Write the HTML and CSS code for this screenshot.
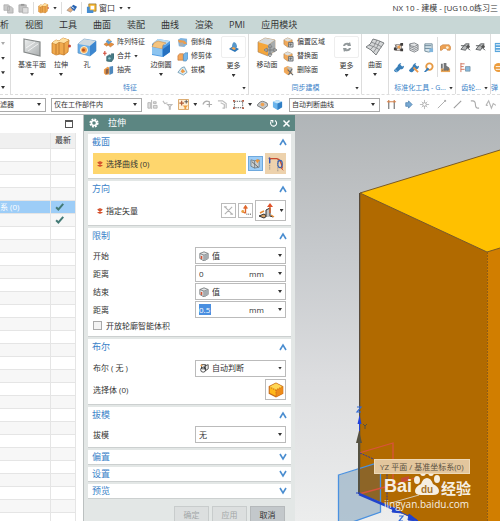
FILE: index.html
```html
<!DOCTYPE html>
<html lang="zh-CN">
<head>
<meta charset="utf-8">
<title>NX 10 - 建模</title>
<link rel="stylesheet" href="styles.css">
</head>
<body>
<svg class="sprite" aria-hidden="true">
  <defs>
    <linearGradient id="grey" x1="0" y1="0" x2="1" y2="1"><stop offset="0" stop-color="#eef0f0"/><stop offset="1" stop-color="#a9adae"/></linearGradient>
    <symbol id="copy" viewBox="0 0 12 12"><path d="M1 2h5l1 1v5H1zM5 4h4l2 2v5H5z" fill="#c9c9c9" stroke="#a9a9a9" stroke-width=".8"/></symbol>
    <symbol id="paste" viewBox="0 0 12 12"><path d="M1 2h8v8H1z" fill="#c4c4c4" stroke="#a5a5a5" stroke-width=".8"/><path d="M3 1h4v2H3z" fill="#999"/><path d="M5 5h6v6H5z" fill="#dedede" stroke="#aaa" stroke-width=".8"/></symbol>
    <symbol id="extrude" viewBox="0 0 20 20"><path d="M1 6l4-3 3 1 4-3 6 2-1 12-4 3-4-1-4 1-4-2z" fill="#f0a94c" stroke="#c67d28" stroke-width=".8"/><path d="M1 6l4 1 3-2 5 1 5-3M5 7v10M8 5v12M13 6v12" fill="none" stroke="#ba772d" stroke-width=".9"/><path d="M5 3l3 1 4-3 6 2-5 3-5-1-3 2-4-1z" fill="#ffe0a0"/><circle cx="18.5" cy="9" r="1.5" fill="#c74b35"/></symbol>
    <symbol id="touch" viewBox="0 0 12 12"><path d="M1 8l4-4 4 2-4 4z" fill="#e5b184" stroke="#86796f" stroke-width=".6"/><path d="M5 5l3-3 4 2-3 5z" fill="#2864b3"/><path d="M6 4l3 2" stroke="#fff"/></symbol>
    <symbol id="windows" viewBox="0 0 12 12"><path d="M3 1h8v8H3z" fill="#f7b62d" stroke="#826a37" stroke-width=".7"/><path d="M5 3h4v4H5z" fill="#fff"/><path d="M1 4h3v4h4v3H1z" fill="#458dd3"/></symbol>
    <symbol id="plane" viewBox="0 0 20 20"><path d="M2 2l16 3v14L2 15z" fill="url(#grey)" stroke="#858989" stroke-width="1.2"/><path d="M4 11l9-6M6 14l10-7" stroke="#fff" stroke-opacity=".7"/></symbol>
    <symbol id="hole" viewBox="0 0 20 20"><path d="M1 7l6-5 12 2v10l-6 5-12-3z" fill="#69aee8" stroke="#5b93c4" stroke-width=".7"/><path d="M1 7l6-5 12 2-6 5z" fill="#cfd9df"/><path d="M13 9l6-5v10l-6 5z" fill="#3c86cf"/><circle cx="7" cy="13" r="3.5" fill="#f3a14a" stroke="#fff3d7"/><circle cx="6.5" cy="13" r="1.5" fill="#b95125"/></symbol>
    <symbol id="pattern" viewBox="0 0 12 12"><path d="M1 8l3-2 3 2-3 2zM5 8l3-2 4 2-4 3z" fill="#e88f3c" stroke="#a96c37" stroke-width=".5"/><path d="M3 5l3-3 4 3-4 3z" fill="#5b9bd2"/><path d="M5 3l2-1 2 2-2 1z" fill="#f2b064"/></symbol>
    <symbol id="unite" viewBox="0 0 12 12"><path d="M4 6l3-2 2 1V3h3v5l-3 4-5-1z" fill="#477b86" stroke="#305c66" stroke-width=".6"/><circle cx="7" cy="8" r="1.3" fill="#8ec4cc"/><path d="M2 0v5M0 2.500h4" stroke="#cf4a37" stroke-width="1.200"/></symbol>
    <symbol id="shell" viewBox="0 0 12 12"><path d="M1 5l4-3 2 1v7l-4 1-2-2z" fill="#ec9b4a"/><path d="M7 2l4-1v8l-4 2z" fill="#4d88bd"/><path d="M3 5l3-1v5l-3 1z" fill="#8b6148"/></symbol>
    <symbol id="blend" viewBox="0 0 20 20"><path d="M1 7l6-5 12 2v11l-7 5-11-2z" fill="#4f9be2"/><path d="M7 2l12 2-5 4-12-2z" fill="#b9daef"/><path d="M1 10q1-5 6-6l8 2q-4 1-4 6z" fill="#f5c47e" stroke="#c48f53" stroke-width=".6"/><path d="M1 10l10 2v7L1 17z" fill="#8cc4f0"/><path d="M12 12l7-5v8l-7 5z" fill="#2671c0"/></symbol>
    <symbol id="chamfer" viewBox="0 0 12 12"><path d="M1 3l3-2 7 1v6l-3 3-6-1z" fill="#7fb3df"/><path d="M1 3l7 1 3 3-3 1-6-2z" fill="#ee9c49"/><path d="M3 6h4v4H3z" fill="#a8adb0"/></symbol>
    <symbol id="trim" viewBox="0 0 12 12"><path d="M1 5l2-2h4v7H1z" fill="#f4a65a" stroke="#bb763d" stroke-width=".7"/><path d="M7 4l2-2h3v6l-2 3H7z" fill="#75b6e9" stroke="#4980ad" stroke-width=".6"/></symbol>
    <symbol id="draft" viewBox="0 0 12 12"><path d="M1 8l4-5 3-1 3 6-4 3z" fill="#d9ecf5" stroke="#5f8da8" stroke-width=".8"/><path d="M4 7l2-3 3 3-3 2z" fill="#ed9b48"/></symbol>
    <symbol id="more" viewBox="0 0 12 12"><path d="M1 8l4-3 6 3-4 3z" fill="#2e77b9"/><path d="M4 6q0-4 2-5 3 1 3 5l-2 2z" fill="#5797ca"/><path d="M3 7l3-1 2 2-2 1z" fill="#f5a44c"/></symbol>
    <symbol id="move" viewBox="0 0 20 20"><path d="M1 5l7-4 10 2v11l-7 5-10-4z" fill="#f5a63b" stroke="#a17e57" stroke-width=".6"/><path d="M1 5l7-4 10 2-7 5z" fill="#d5d8d9"/><path d="M11 8l7-5v11l-7 5z" fill="#a6abad"/><path d="M13 8v10M8 13h11M13 7l-2 3h4zM13 20l-2-3h4zM7 13l3-2v4zM20 13l-3-2v4z" stroke="#77797b" fill="#f3f3f3" stroke-width=".9"/></symbol>
    <symbol id="offset" viewBox="0 0 12 12"><path d="M1 3l4-2 5 2v6l-5 2-4-3z" fill="#f1a95a" stroke="#a57948" stroke-width=".6"/><path d="M1 3l4-2 5 2-5 2z" fill="#dadfe0"/><path d="M6 6h5v5H6z" fill="#c0c4c7" stroke="#5b6064" stroke-width=".8"/><path d="M8 7v3M7 8h3" stroke="#555" stroke-width=".7"/></symbol>
    <symbol id="delete" viewBox="0 0 12 12"><path d="M1 3l4-2 5 2v6l-5 2-4-3z" fill="#f1a95a"/><path d="M4 2l6 1v6z" fill="#b8bec1"/><path d="M5 5l6 6M10 4l-4 7" stroke="#62676a" stroke-width="1.200"/></symbol>
    <symbol id="cycle" viewBox="0 0 12 12"><path d="M2 5q1-4 6-3l1-1 1 4H6l1-1Q5 3 4 5zM10 7q-1 4-6 3l-1 1-1-4h4L5 8q2 1 3-1z" fill="#92999b"/></symbol>
    <symbol id="surface" viewBox="0 0 20 20"><path d="M1 10q5-2 7-8 5 1 11 4-5 7-8 12Q6 12 1 10z" fill="#d5d7d8" stroke="#7b7f81"/><path d="M4 8q7 2 11 5M6 5q6 2 11 5M5 13q5-4 7-10M8 16q4-5 7-12" fill="none" stroke="#7b7f81" stroke-width=".8"/></symbol>
    <symbol id="nodes" viewBox="0 0 12 12"><path d="M2 3l7 6M9 2L3 9M3 3h6v6H3z" fill="none" stroke="#77706c"/><path d="M1 6h3v3H1zM8 1h3v3H8zM8 7h3v3H8z" fill="#3f3c3b"/><path d="M5 4h3v3H5z" fill="#ee9e4c"/></symbol>
    <symbol id="layers" viewBox="0 0 12 12"><path d="M2 2l5-1 4 2-4 2-5-1zM2 5l5 2 4-2M2 7l5 2 4-2M2 9l5 2 4-2M2 2v7M11 3v6" fill="#e2e4e5" stroke="#747a7e" stroke-width=".9"/></symbol>
    <symbol id="db" viewBox="0 0 12 12"><path d="M2 2h8v8q-4 2-8 0z" fill="#d6e4ec" stroke="#748c9a"/><path d="M2 4h7M2 7h7" stroke="#668395"/><path d="M7 7h4v4H7z" fill="#80b6de"/></symbol>
    <symbol id="band" viewBox="0 0 12 12"><path d="M0 5l3-2h7l2 3-1 3H8L7 7H4L2 9H0z" fill="#eea153" stroke="#c17d3d" stroke-width=".6"/><circle cx="8" cy="6" r="1.500" fill="#fff0cf"/></symbol>
    <symbol id="wrench" viewBox="0 0 12 12"><path d="M1 9l4-4q0-3 4-4L8 3l2 2 2-1q0 4-4 4l-3 3q-3 1-4-2z" fill="#397eb8"/><path d="M2 8l3 3" stroke="#a7d4f1"/></symbol>
    <symbol id="wrench2" viewBox="0 0 12 12"><path d="M1 9l4-4q0-3 4-4L8 3l2 2 2-1q0 4-4 4l-3 3q-3 1-4-2z" fill="#397eb8"/><path d="M6 6l5 5" stroke="#ee994a" stroke-width="2"/></symbol>
    <symbol id="wheel" viewBox="0 0 12 12"><circle cx="7" cy="5" r="3.500" fill="#fff" stroke="#e79a43" stroke-width="2"/><path d="M1 11l4-5 2 2-4 3z" fill="#367cba"/></symbol>
    <symbol id="gear-car" viewBox="0 0 12 12"><path d="M1 7h10v4H1z" fill="#eba656"/><path d="M1 2h2v5H1zM4 1h3v3l3 2v3H4z" fill="#757779"/><path d="M2 9h8" stroke="#57595a" stroke-dasharray="1 1"/></symbol>
    <symbol id="gears" viewBox="0 0 12 12"><path d="M1 4h5l5 5M1 8l5-6h4l-4 7z" fill="#b8babb" stroke="#5f6365"/><circle cx="9" cy="5" r="1.700" fill="#555"/></symbol>
    <symbol id="rack" viewBox="0 0 12 12"><path d="M1 1v10M1 2h4M1 5h3M1 8h4" stroke="#cf6d55"/><path d="M6 5h5v5H6z" fill="#8bbcdf" stroke="#638396" stroke-width=".7"/></symbol>
    <symbol id="spring" viewBox="0 0 12 12"><path d="M2 1h8v10H2z" fill="#58a5dc"/><path d="M3 3h6M3 6h6M3 9h6" stroke="#fff"/></symbol>
    <symbol id="ball" viewBox="0 0 12 12"><circle cx="6" cy="6" r="5" fill="#ec9c3c"/><path d="M3 5h6M3 8h6" stroke="#fff"/></symbol>
    <symbol id="clip" viewBox="0 0 12 12"><path d="M1 4h3v6H1zM5 1v10M7 3h3v2H7zM7 7h4v3H7z" fill="#dedede" stroke="#b5b5b5"/></symbol>
    <symbol id="filter" viewBox="0 0 12 12"><path d="M1 2l2 3 3-1M6 6h5L9 8v3H8V8z" fill="none" stroke="#bcbcbc" stroke-width="1.200"/></symbol>
    <symbol id="snap" viewBox="0 0 12 12"><path d="M.5 .5h11v11H.5z" fill="#fff0d7" stroke="#d8a260"/><path d="M4 2v5M1.500 4.500h5" stroke="#b05b34" stroke-width="1.300"/><path d="M5 7h6l-2 2v2H7V9z" fill="#ef9c3d"/><path d="M9 1v4M7 3h4" stroke="#555"/></symbol>
    <symbol id="arc" viewBox="0 0 12 12"><path d="M1 6q2-5 7-3v6M5 6h6" fill="none" stroke="#adadad" stroke-width="1.300"/></symbol>
    <symbol id="arc2" viewBox="0 0 12 12"><path d="M1 2h5l4 3v5M4 4l4 2v4H6" fill="none" stroke="#bcbcbc" stroke-width="1.300"/></symbol>
    <symbol id="marquee" viewBox="0 0 12 12"><path d="M1.500 2.500h9v7h-9z" fill="none" stroke="#4e5356" stroke-dasharray="1.500 1"/><path d="M0 1h2v2H0zM10 1h2v2h-2zM0 9h2v2H0zM10 9h2v2h-2z" fill="#b45e47"/></symbol>
    <symbol id="disc" viewBox="0 0 12 12"><path d="M0 7q4-6 8-4 4 1 4 4l-5 4z" fill="#c5c7c8" stroke="#77797b"/><circle cx="6" cy="6" r="2" fill="#efa150"/></symbol>
    <symbol id="cube-blue" viewBox="0 0 12 12"><path d="M1 3l5-2 5 2v6l-5 3-5-3z" fill="#69b4ed"/><path d="M1 3l5-2 5 2-5 2z" fill="#c5e6fb"/><path d="M6 5l5-2v6l-5 3z" fill="#317fc5"/></symbol>
    <symbol id="parallel" viewBox="0 0 12 12"><path d="M3 2v9M9 2v9" stroke="#777" stroke-width="1.300"/><path d="M1 3h10M3 1v3M9 1v3" stroke="#d58550" stroke-width="1.200"/></symbol>
    <symbol id="arrow" viewBox="0 0 12 12"><path d="M3 4h3V2l4 4-4 4V8H3z" fill="#78a9d3" stroke="#4c80ad" stroke-width=".8"/></symbol>
    <symbol id="cross" viewBox="0 0 12 12"><path d="M6 1v10M1 6h10M3 3l6 6M9 3L3 9" stroke="#b9b9b9"/><circle cx="6" cy="6" r="2" fill="#fff" stroke="#aaa"/></symbol>
    <symbol id="line" viewBox="0 0 12 12"><path d="M2 10l8-8" stroke="#a9a9a9"/><path d="M9 1h2v2H9z" fill="#aaa"/></symbol>
    <symbol id="slash" viewBox="0 0 12 12"><path d="M2 10l8-8" stroke="#9e9e9e" stroke-width="1.200"/></symbol>
    <symbol id="curve" viewBox="0 0 12 12"><path d="M2 2h2q3 0 3 4t3 4h1" fill="none" stroke="#aaa" stroke-width="1.200"/></symbol>
    <symbol id="spline" viewBox="0 0 12 12"><path d="M1 7l3-5 3 8 2-5 3 2M1 7h2" fill="none" stroke="#b4b4b4" stroke-width="1.200"/></symbol>
    <symbol id="gear" viewBox="0 0 12 12"><circle cx="6" cy="6" r="4.500" fill="none" stroke="#fff" stroke-width="2" stroke-dasharray="2.200 1.330"/><circle cx="6" cy="6" r="3" fill="none" stroke="#fff" stroke-width="1.800"/></symbol>
    <symbol id="reset" viewBox="0 0 12 12"><path d="M3 3a4 4 0 1 0 5-1M2 2h3v3" fill="none" stroke="#fff" stroke-width="1.500"/></symbol>
    <symbol id="close" viewBox="0 0 12 12"><path d="M2 2l8 8M10 2l-8 8" stroke="#fff" stroke-width="2"/></symbol>
    <symbol id="up" viewBox="0 0 8 8"><path d="M1 7l3-5 3 5" fill="none" stroke="#4a8dd0" stroke-width="1.600"/></symbol>
    <symbol id="down" viewBox="0 0 8 8"><path d="M1 1l3 5 3-5" fill="none" stroke="#4a8dd0" stroke-width="1.600"/></symbol>
    <symbol id="check" viewBox="0 0 12 12"><path d="M1.500 7l3 3L11 2.500" fill="none" stroke="#437a76" stroke-width="2.600"/></symbol>
    <symbol id="star" viewBox="0 0 8 8"><path d="M4 0v8M1 1.500l6 5M7 1.500l-6 5" stroke="#d4502c" stroke-width="1.800"/></symbol>
    <symbol id="sketch" viewBox="0 0 12 12"><path d="M1 2l4 1v8L1 9zM5 3l5-1v8l-5 1" fill="#c8cdd0" stroke="#64727c" stroke-width=".8"/><path d="M2 4l7 6" stroke="#666"/><path d="M8 1l1 1 2 1-2 1-1 2-1-2-1-1 1-1z" fill="#ee9538"/></symbol>
    <symbol id="curves" viewBox="0 0 20 20"><path d="M3 3v14M12 5v13" stroke="#777" stroke-dasharray="1 1"/><path d="M3 3v6M2 3l2 2" stroke="#2850bd" stroke-width="1.500"/><path d="M3 4h8q5 1 6 11" fill="none" stroke="#c8492e" stroke-width="1.600"/><ellipse cx="14.500" cy="10" rx="2.500" ry="4" fill="none" stroke="#315fb3" stroke-width="1.200"/><path d="M15 14l3 3" stroke="#c8492e"/></symbol>
    <symbol id="flip" viewBox="0 0 12 12"><path d="M2 2l8 8M10 2l-8 8M1 2h3M8 10h3" stroke="#b3b3b3" stroke-width="1.200" fill="none"/></symbol>
    <symbol id="vector" viewBox="0 0 12 12"><path d="M6 9V2M4 4l2-3 2 3M6 9L2 7" stroke="#df672d" fill="none" stroke-width="1.500"/><circle cx="3" cy="7" r="1.500" fill="#e8a242"/><path d="M7 10h1M9 10h1M11 10h1" stroke="#333"/></symbol>
    <symbol id="normal" viewBox="0 0 18 18"><path d="M1 14l5-2 3 2-3 2z" fill="#d9a266" stroke="#333"/><path d="M8 15V8l4-2v8l3 1" fill="#c3c4c4" stroke="#333"/><path d="M12 11V4" stroke="#d5662f" stroke-width="1.500"/><path d="M9 5l3-4 3 4z" fill="#e05129"/><path d="M2 11l4-2M13 13l3 2" stroke="#e78b35" stroke-width="1.500"/></symbol>
    <symbol id="limit" viewBox="0 0 12 12"><path d="M1 3l5-2 5 2v6l-5 3-5-3z" fill="#e2e4e5" stroke="#72777a"/><path d="M1 3l5 2 5-2M6 5v7" fill="none" stroke="#72777a"/><path d="M6 5l5-2v6l-5 3z" fill="#a5abaf"/><path d="M3 9.500V6" stroke="#d55233" stroke-width="1.800"/></symbol>
    <symbol id="boolean" viewBox="0 0 12 12"><path d="M3 2h5v5H3zM6 4l5-2v5L8 9z" fill="none" stroke="#333"/><circle cx="5" cy="8" r="3" fill="none" stroke="#333"/><circle cx="3" cy="3" r="1.300" fill="#e9a04c"/></symbol>
    <symbol id="body" viewBox="0 0 16 16"><path d="M2 5l6-3 6 3v6l-6 3-6-3z" fill="#ffb718" stroke="#c96c18"/><path d="M2 5l6-3 6 3-6 3z" fill="#ffd755"/><path d="M8 8l6-3v6l-6 3z" fill="#ee8b18"/><path d="M2 5l6 3 6-3M8 8v6" stroke="#c96c18" stroke-dasharray="1 1" fill="none"/></symbol>
  </defs>
</svg>

<header class="titlebar">
  <div class="quick">
    <button aria-label="复制"><svg><use href="#copy"/></svg></button>
    <button aria-label="粘贴"><svg><use href="#paste"/></svg></button>
    <i class="rule"></i>
    <button aria-label="拉伸"><svg><use href="#extrude"/></svg></button><i class="caret"></i>
    <i class="rule"></i>
    <button aria-label="触控"><svg><use href="#touch"/></svg></button>
    <i class="rule"></i>
    <button class="window-menu"><svg><use href="#windows"/></svg>窗口</button><i class="caret"></i><i class="caret"></i>
  </div>
  <h1>NX 10 - 建模 - [UG10.0练习三</h1>
</header>

<nav class="menu">
  <a href="#a">析</a><a href="#a">视图</a><a href="#a">工具</a><a href="#a">曲面</a><a href="#a">装配</a><a href="#a">曲线</a><a href="#a">渲染</a><a href="#a">PMI</a><a href="#a">应用模块</a>
</nav>

<section class="ribbon">
  <div class="edge"><i class="caret pale"></i><i class="caret"></i><i class="caret"></i><i class="caret"></i></div>
  <div class="group">
    <div class="tools">
      <button class="big"><svg><use href="#plane"/></svg>基准平面<i class="caret"></i></button>
      <button class="big"><svg><use href="#extrude"/></svg>拉伸<i class="caret"></i></button>
      <button class="big"><svg><use href="#hole"/></svg>孔</button>
      <div class="stack">
        <button><svg><use href="#pattern"/></svg>阵列特征</button>
        <button><svg><use href="#unite"/></svg>合并<i class="caret"></i></button>
        <button><svg><use href="#shell"/></svg>抽壳</button>
      </div>
      <button class="big"><svg><use href="#blend"/></svg>边倒圆<i class="caret"></i></button>
      <div class="stack">
        <button><svg><use href="#chamfer"/></svg>倒斜角</button>
        <button><svg><use href="#trim"/></svg>修剪体</button>
        <button><svg><use href="#draft"/></svg>拔模</button>
      </div>
      <button class="big more"><span><svg><use href="#more"/></svg></span>更多<i class="caret"></i></button>
    </div>
    <div class="caption"><b>特征</b><i class="caret"></i></div>
  </div>
  <div class="group">
    <div class="tools">
      <button class="big"><svg><use href="#move"/></svg>移动面</button>
      <div class="stack">
        <button><svg><use href="#offset"/></svg>偏置区域</button>
        <button><svg><use href="#offset"/></svg>替换面</button>
        <button><svg><use href="#delete"/></svg>删除面</button>
      </div>
      <button class="big more"><span><svg><use href="#cycle"/></svg></span>更多<i class="caret"></i></button>
    </div>
    <div class="caption"><b>同步建模</b><i class="caret"></i></div>
  </div>
  <div class="group narrow">
    <div class="tools"><button class="big"><svg><use href="#surface"/></svg>曲面<i class="caret"></i></button></div>
  </div>
  <div class="group narrow">
    <div class="tools icons">
      <div class="matrix three">
        <button aria-label="节点"><svg><use href="#nodes"/></svg></button><button aria-label="图层"><svg><use href="#layers"/></svg></button><button aria-label="数据"><svg><use href="#db"/></svg></button>
        <button aria-label="工具一"><svg><use href="#wrench"/></svg></button><button aria-label="工具二"><svg><use href="#wrench2"/></svg></button><button aria-label="工具三"><svg><use href="#wheel"/></svg></button>
      </div>
      <div class="matrix one split">
        <button aria-label="带"><svg><use href="#band"/></svg></button><button aria-label="齿条车"><svg><use href="#gear-car"/></svg></button>
      </div>
    </div>
    <div class="caption"><b>标准化工具 - G...</b><i class="caret"></i></div>
  </div>
  <div class="group narrow">
    <div class="tools icons"><div class="matrix two">
      <button aria-label="齿轮一"><svg><use href="#gears"/></svg></button><button aria-label="齿轮二"><svg><use href="#gears"/></svg></button><button aria-label="齿轮三"><svg><use href="#rack"/></svg></button>
    </div></div>
    <div class="caption"><b>齿轮...</b><i class="caret"></i></div>
  </div>
  <div class="group last">
    <div class="tools icons"><div class="matrix one">
      <button aria-label="弹簧"><svg><use href="#spring"/></svg></button><button aria-label="弹簧二"><svg><use href="#ball"/></svg></button>
    </div></div>
    <div class="caption"><b>弹</b></div>
  </div>
</section>

<div class="toolbar">
  <div class="pick first"><select aria-label="过滤器"><option>滤器</option></select><i class="caret"></i></div>
  <div class="pick"><select aria-label="选择范围"><option>仅在工作部件内</option></select><i class="caret"></i></div>
  <div class="strip">
    <button aria-label="夹"><svg><use href="#clip"/></svg></button><button aria-label="过滤"><svg><use href="#filter"/></svg></button><button aria-label="捕捉"><svg><use href="#snap"/></svg></button><i class="caret"></i><button aria-label="圆弧"><svg><use href="#arc"/></svg></button><button aria-label="转角"><svg><use href="#arc2"/></svg></button><button aria-label="框选"><svg><use href="#marquee"/></svg></button><i class="caret"></i><button aria-label="盘"><svg><use href="#disc"/></svg></button><button aria-label="着色"><svg><use href="#cube-blue"/></svg></button>
  </div>
  <div class="pick"><select aria-label="曲线规则"><option>自动判断曲线</option></select><i class="caret"></i></div>
  <div class="strip wide">
    <button aria-label="平行"><svg><use href="#parallel"/></svg></button><button aria-label="跟随"><svg><use href="#arrow"/></svg></button><button aria-label="交点"><svg><use href="#cross"/></svg></button><button aria-label="端点"><svg><use href="#line"/></svg></button><button aria-label="中点"><svg><use href="#slash"/></svg></button><button aria-label="曲线"><svg><use href="#curve"/></svg></button><button aria-label="样条"><svg><use href="#spline"/></svg></button>
  </div>
</div>

<main>
  <aside class="navigator">
    <div class="nav-head"><button aria-label="最大化"></button></div>
    <table>
      <thead><tr><th></th><th>最新</th></tr></thead>
      <tbody>
        <tr><td></td><td></td></tr><tr><td></td><td></td></tr><tr><td></td><td></td></tr><tr><td></td><td></td></tr>
        <tr class="selected"><td>系 (0)</td><td><svg><use href="#check"/></svg></td></tr>
        <tr><td></td><td><svg><use href="#check"/></svg></td></tr>
        <tr><td></td><td></td></tr><tr><td></td><td></td></tr><tr><td></td><td></td></tr><tr><td></td><td></td></tr>
        <tr><td></td><td></td></tr><tr><td></td><td></td></tr><tr><td></td><td></td></tr><tr><td></td><td></td></tr>
        <tr><td></td><td></td></tr><tr><td></td><td></td></tr><tr><td></td><td></td></tr><tr><td></td><td></td></tr>
        <tr><td></td><td></td></tr><tr><td></td><td></td></tr><tr><td></td><td></td></tr><tr><td></td><td></td></tr>
        <tr><td></td><td></td></tr><tr><td></td><td></td></tr><tr><td></td><td></td></tr><tr><td></td><td></td></tr>
        <tr><td></td><td></td></tr><tr><td></td><td></td></tr><tr><td></td><td></td></tr>
      </tbody>
    </table>
  </aside>

  <form class="dialog">
    <header><svg><use href="#gear"/></svg><h2>拉伸</h2><button type="button" aria-label="重置"><svg><use href="#reset"/></svg></button><button type="button" aria-label="关闭"><svg><use href="#close"/></svg></button></header>
    <div class="panels">
      <section>
        <h3>截面<svg><use href="#up"/></svg></h3>
        <div class="rows">
          <div class="row"><span class="label active"><svg><use href="#star"/></svg>选择曲线 (0)</span>
            <button type="button" class="small on" aria-label="草图"><svg><use href="#sketch"/></svg></button><button type="button" class="large tan" aria-label="曲线"><svg><use href="#curves"/></svg></button></div>
        </div>
      </section>
      <section>
        <h3>方向<svg><use href="#up"/></svg></h3>
        <div class="rows">
          <div class="row"><span class="label"><svg><use href="#star"/></svg>指定矢量</span>
            <button type="button" class="small" aria-label="反向"><svg><use href="#flip"/></svg></button><button type="button" class="small" aria-label="矢量对话框"><svg><use href="#vector"/></svg></button><button type="button" class="large drop" aria-label="面法向"><svg><use href="#normal"/></svg><i class="caret"></i></button></div>
        </div>
      </section>
      <section>
        <h3>限制<svg><use href="#up"/></svg></h3>
        <div class="rows">
          <div class="row"><label for="start">开始</label><div class="field"><svg><use href="#limit"/></svg><select id="start"><option>值</option></select><i class="caret"></i></div></div>
          <div class="row"><label for="d1">距离</label><div class="field"><input id="d1" value="0"><select class="unit" aria-label="单位"><option>mm</option></select><i class="caret"></i></div></div>
          <div class="row"><label for="end">结束</label><div class="field"><svg><use href="#limit"/></svg><select id="end"><option>值</option></select><i class="caret"></i></div></div>
          <div class="row"><label for="d2">距离</label><div class="field"><input id="d2" class="marked" value="0.5"><select class="unit" aria-label="单位"><option>mm</option></select><i class="caret"></i></div></div>
          <div class="row check"><input type="checkbox" id="open"><label for="open">开放轮廓智能体积</label></div>
        </div>
      </section>
      <section>
        <h3>布尔<svg><use href="#up"/></svg></h3>
        <div class="rows">
          <div class="row tall"><label for="bool">布尔 ( 无 )</label><div class="field"><svg><use href="#boolean"/></svg><select id="bool"><option>自动判断</option></select><i class="caret"></i></div></div>
          <div class="row"><label for="pickbody">选择体 (0)</label><button type="button" id="pickbody" class="large"><svg><use href="#body"/></svg></button></div>
        </div>
      </section>
      <section>
        <h3>拔模<svg><use href="#up"/></svg></h3>
        <div class="rows">
          <div class="row"><label for="draftsel">拔模</label><div class="field"><select id="draftsel"><option>无</option></select><i class="caret"></i></div></div>
        </div>
      </section>
      <section class="closed"><h3>偏置<svg><use href="#down"/></svg></h3></section>
      <section class="closed"><h3>设置<svg><use href="#down"/></svg></h3></section>
      <section class="closed"><h3>预览<svg><use href="#down"/></svg></h3></section>
    </div>
    <footer><button type="button" disabled>确定</button><button type="button" disabled>应用</button><button type="button">取消</button></footer>
  </form>

  <div class="viewport">
    <svg class="scene" viewBox="295 115 205 406" preserveAspectRatio="xMinYMin slice">
      <path d="M360 193L500 150V249L487 252z" fill="#ffc000"/>
      <path d="M360 193L487 252V553L360 494z" fill="#b16a00"/>
      <path d="M487 252l13-4v273h-13z" fill="#d17e00"/>
      <path d="M360 494V193L500 150M360 193l127 59 13-4" fill="none" stroke="#7b5a24"/>
      <path d="M487.500 252v269" stroke="#8f5d17" stroke-dasharray="2 1"/>
      <path d="M359.500 193v301" stroke="#56493a"/>
      <path d="M339 475l42-13v50l-42 15z" fill="#9eb5c8" fill-opacity=".75"/>
      <path d="M360 468l21-6v40l-21-8z" fill="#8d6527"/>
      <path d="M338.500 475l42-13v50l-42 15z" fill="none" stroke="#4a91e0" stroke-width="1.300"/>
      <path d="M359 453l34-10v42l-34 9" fill="none" stroke="#d9533c" stroke-width="1.300"/>
      <path d="M401 478l8-2v4l-8 2z" fill="#c34b34"/>
      <path d="M393 485l22-7" stroke="#d9533c"/>
      <path d="M360 453l27 12v42" fill="none" stroke="#2a3a9e" stroke-dasharray="2 1"/>
      <path d="M359 494v-53" stroke="#555141" stroke-width="2"/>
      <path d="M359 431l-3 12h6z" fill="#555141"/>
      <path d="M359.500 431v-10" stroke="#2545cf"/>
      <path d="M359.500 415l-2 9h4z" fill="#2040dc"/>
      <path d="M357 407h4l-4 5h4M399 516h4l-4 5h4" fill="none" stroke="#2d68d8" stroke-width="1.200"/>
      <path d="M363 424l2 2 2-2M365 426v3" fill="none" stroke="#555141"/>
      <path d="M359 494l37 16" stroke="#2143cc" stroke-width="2.500"/>
      <path d="M394 507l8 6-10-1zM409 514l9 7-10-1z" fill="#2143cc" stroke="#2143cc"/>
      <path d="M400 512l17 8M360 493h-4" stroke="#2143cc"/>
      <path d="M391 503l28-8" stroke="#d6c9b2"/>
      <g class="watermark">
        <text class="brand" x="384" y="492">Bai</text>
        <ellipse cx="417" cy="480" rx="3" ry="4"/><ellipse cx="423" cy="472" rx="3" ry="4"/><ellipse cx="431" cy="472" rx="3" ry="4"/><ellipse cx="437" cy="479" rx="3" ry="4"/>
        <path d="M427 478q4 0 6 6 6 3 6 7t-6 4h-12q-6 0-6-4t6-7q2-6 6-6z"/>
        <text class="du" x="421" y="493">du</text>
        <text class="cn" x="441" y="494">经验</text>
        <text class="site" x="384" y="508">jingyan.baidu.com</text>
      </g>
    </svg>
    <div class="tip">YZ 平面 / 基准坐标系(0)</div>
  </div>
</main>
</body>
</html>
```
FILE: styles.css
```css
* { box-sizing: border-box; }
html, body { height: 100%; }
body {
  margin: 0;
  display: flex;
  flex-direction: column;
  overflow: hidden;
  background: #fff;
  color: #333;
  font: 8px/12px "Open Sans", "Noto Sans CJK SC", sans-serif;
}
button, select, input { font: inherit; color: inherit; margin: 0; padding: 0; border: 0; background: none; }
button { display: flex; align-items: center; justify-content: center; flex: none; white-space: nowrap; }
select { appearance: none; flex: 1; min-width: 0; }
svg { display: block; flex: none; width: 11px; height: 11px; }
h1, h2, h3 { margin: 0; font-weight: 400; }
.sprite { position: absolute; width: 0; height: 0; }
.caret { flex: none; width: 4px; height: 3px; background: #333; clip-path: polygon(0 0, 100% 0, 50% 100%); }
.pale { background: #aaa; }

.titlebar { display: flex; flex: none; height: 16px; align-items: center; justify-content: space-between; overflow: hidden; }
.quick { display: flex; align-items: center; gap: 4px; height: 14px; padding-left: 3px; }
.quick .rule { width: 1px; height: 12px; background: #ddd; }
.window-menu { gap: 2px; }
.titlebar h1 { padding-right: 2px; font-size: 8px; white-space: nowrap; flex: none; }

.menu { display: flex; flex: none; height: 18px; align-items: center; gap: 16px; background: #c8d7d6; font-size: 9px; overflow: hidden; }
.menu a { color: #333; text-decoration: none; white-space: nowrap; }

.ribbon { display: flex; flex: none; height: 60px; font-size: 7px; overflow: hidden; }
.edge { display: flex; flex-direction: column; flex: none; width: 11px; padding: 8px 0 5px 1px; justify-content: space-between; border-right: 1px solid #ddd; }
.group { display: flex; flex-direction: column; flex: none; padding: 0 2px 0 7px; border-right: 1px solid #ddd; }
.narrow { padding: 0 2px; }
.group.last { padding: 0; border: 0; }
.tools { display: flex; flex: 1; gap: 4px; align-items: flex-start; }
.big { flex-direction: column; justify-content: flex-start; min-width: 22px; padding-top: 3px; line-height: 16px; }
.big svg { width: 20px; height: 20px; }
.more { min-width: 25px; margin-left: 4px; padding-top: 2px; }
.more span { display: flex; align-items: center; justify-content: center; width: 25px; height: 22px; border: 1px solid #eee; border-radius: 2px; }
.more svg { width: 12px; height: 12px; }
.stack { display: flex; flex-direction: column; align-items: flex-start; padding: 1px 1px 0; }
.stack button { height: 14px; gap: 3px; }
.caption { display: flex; align-items: center; height: 12px; color: #3a82c8; }
.caption b { flex: 1; font-weight: 400; text-align: center; white-space: nowrap; }
.last .caption b { text-align: left; }
.tools.icons { gap: 1px; padding-top: 3px; }
.matrix { display: grid; grid-auto-rows: 20px; }
.matrix button { width: 15px; }
.three { grid-template-columns: repeat(3, 15px); }
.two { grid-template-columns: repeat(2, 15px); }
.one { grid-template-columns: 15px; }
.split { border-left: 1px solid #ddd; }

.toolbar { display: flex; flex: none; height: 21px; align-items: center; border-top: 1px dashed #ddd; border-bottom: 1px solid #bbb; font-size: 7px; overflow: hidden; }
.pick { display: flex; flex: none; align-items: center; width: 91px; height: 14px; padding: 0 4px 0 2px; border: 1px solid #aaa; background: #fff; }
.pick.first { width: 46px; margin-right: 5px; padding-left: 0; border-left: 0; }
.strip { display: flex; flex: 1 0 auto; align-items: center; justify-content: space-between; max-width: 148px; padding: 0 6px 0 5px; }
.strip.wide { max-width: 120px; padding: 0 4px 0 6px; }

main { display: flex; flex: 1; min-height: 0; }
.navigator { flex: none; width: 83px; padding-right: 7px; overflow: hidden; background: #fff; }
.nav-head { display: flex; height: 18px; align-items: center; justify-content: flex-end; padding-right: 3px; }
.nav-head button { width: 8px; height: 8px; border: 1px solid #555; border-top-width: 2px; }
table { width: 100%; border-collapse: collapse; table-layout: fixed; }
th, td { height: 13px; padding: 0; border: 0 solid #e5e5e5; border-width: 0 1px 1px 0; font-weight: 400; line-height: 12px; white-space: nowrap; overflow: hidden; }
th { height: 15px; background: #f0f0f0; }
th:last-child { width: 25px; }
td svg { width: 9px; height: 9px; margin-left: 4px; }
tbody tr:nth-child(even) { background: #f7f7f7; }
tbody tr.selected { background: #9dcdf7; color: #fff; }

.dialog { display: flex; flex-direction: column; flex: none; width: 212px; border: 0 solid #bbc0c0; border-left-width: 1px; background: #e3e7e6; overflow: hidden; }
.dialog > header { display: flex; flex: none; align-items: center; gap: 4px; height: 16px; padding: 0 4px 0 5px; background: #5c8682; color: #fff; }
.dialog header > svg { width: 10px; height: 10px; }
.dialog header button svg { width: 9px; height: 9px; }
.dialog h2 { flex: 1; padding-left: 5px; font-size: 9px; }
.panels { display: flex; flex: none; flex-direction: column; gap: 3px; padding: 3px 4px 0; }
.panels section { background: #fff; box-shadow: 0 1px 0 #ccd0d0; }
.panels h3 { display: flex; align-items: center; justify-content: space-between; height: 16px; padding: 0 4px 0 4px; color: #3a82c8; font-size: 9px; }
.panels h3 svg { width: 8px; height: 8px; }
.panels .closed h3 { height: 14px; }
.rows { display: flex; flex-direction: column; gap: 1px; padding: 3px 5px 4px; }
.row { display: flex; align-items: center; gap: 2px; min-height: 17px; }
.row.tall { min-height: 20px; }
.row.check { min-height: 13px; gap: 4px; }
.row > label, .label { flex: 1; }
.label { display: flex; align-items: center; gap: 3px; height: 21px; padding-left: 4px; }
.label svg { width: 6px; height: 6px; }
.active { background: #fed66d; }
.small, .large { width: 15px; height: 15px; border: 1px solid #bbb; background: #fff; }
.large { width: 21px; height: 21px; }
.large svg { width: 18px; height: 18px; }
.on { background: #9dcdf7; border-color: #6ea9de; }
.tan { background: #edd2ad; border-color: #edd2ad; }
.drop { width: 31px; gap: 4px; }
.field { display: flex; flex: none; align-items: center; width: 91px; height: 17px; padding: 0 3px; border: 1px solid #bbb; background: #fff; }
.field svg { width: 10px; height: 10px; margin-right: 3px; }
.field input { width: 12px; height: 11px; margin-right: auto; }
.field .marked { background: #4a8fe0; color: #fff; }
.field .unit { flex: none; width: 29px; }
.check input { appearance: none; width: 9px; height: 9px; border: 1px solid #aaa; background: #f3f3f3; }
.dialog footer { display: flex; flex: none; gap: 3px; justify-content: flex-end; padding: 8px 10px 0; }
.dialog footer button { width: 35px; height: 17px; border: 1px solid #b5b9bb; background: #c3c8cb; }
.dialog footer button:disabled { background: #dcdfdf; border-color: #c8cccc; color: #a2a6a7; }

.viewport { position: relative; flex: 1; min-width: 0; overflow: hidden; background: linear-gradient(#b0b5b8, #b9bcbe 12%, #c7cacd 35%, #dcdddf 65%, #eceded); }
.scene { width: 100%; height: 100%; }
.tip { position: absolute; left: 79px; top: 344px; padding: 0 5px; border: 1px solid #eed9b7; background: #e3c69d; color: #59503f; line-height: 13px; white-space: nowrap; }
.watermark { fill: #f6efe2; }
.brand { font: bold 18px "Liberation Sans", sans-serif; }
.du { font: bold 10px "Liberation Sans", sans-serif; fill: #a8732a; }
.cn { font: bold 15px "Noto Sans CJK SC", sans-serif; }
.site { font: 10px "Open Sans", sans-serif; }
```
